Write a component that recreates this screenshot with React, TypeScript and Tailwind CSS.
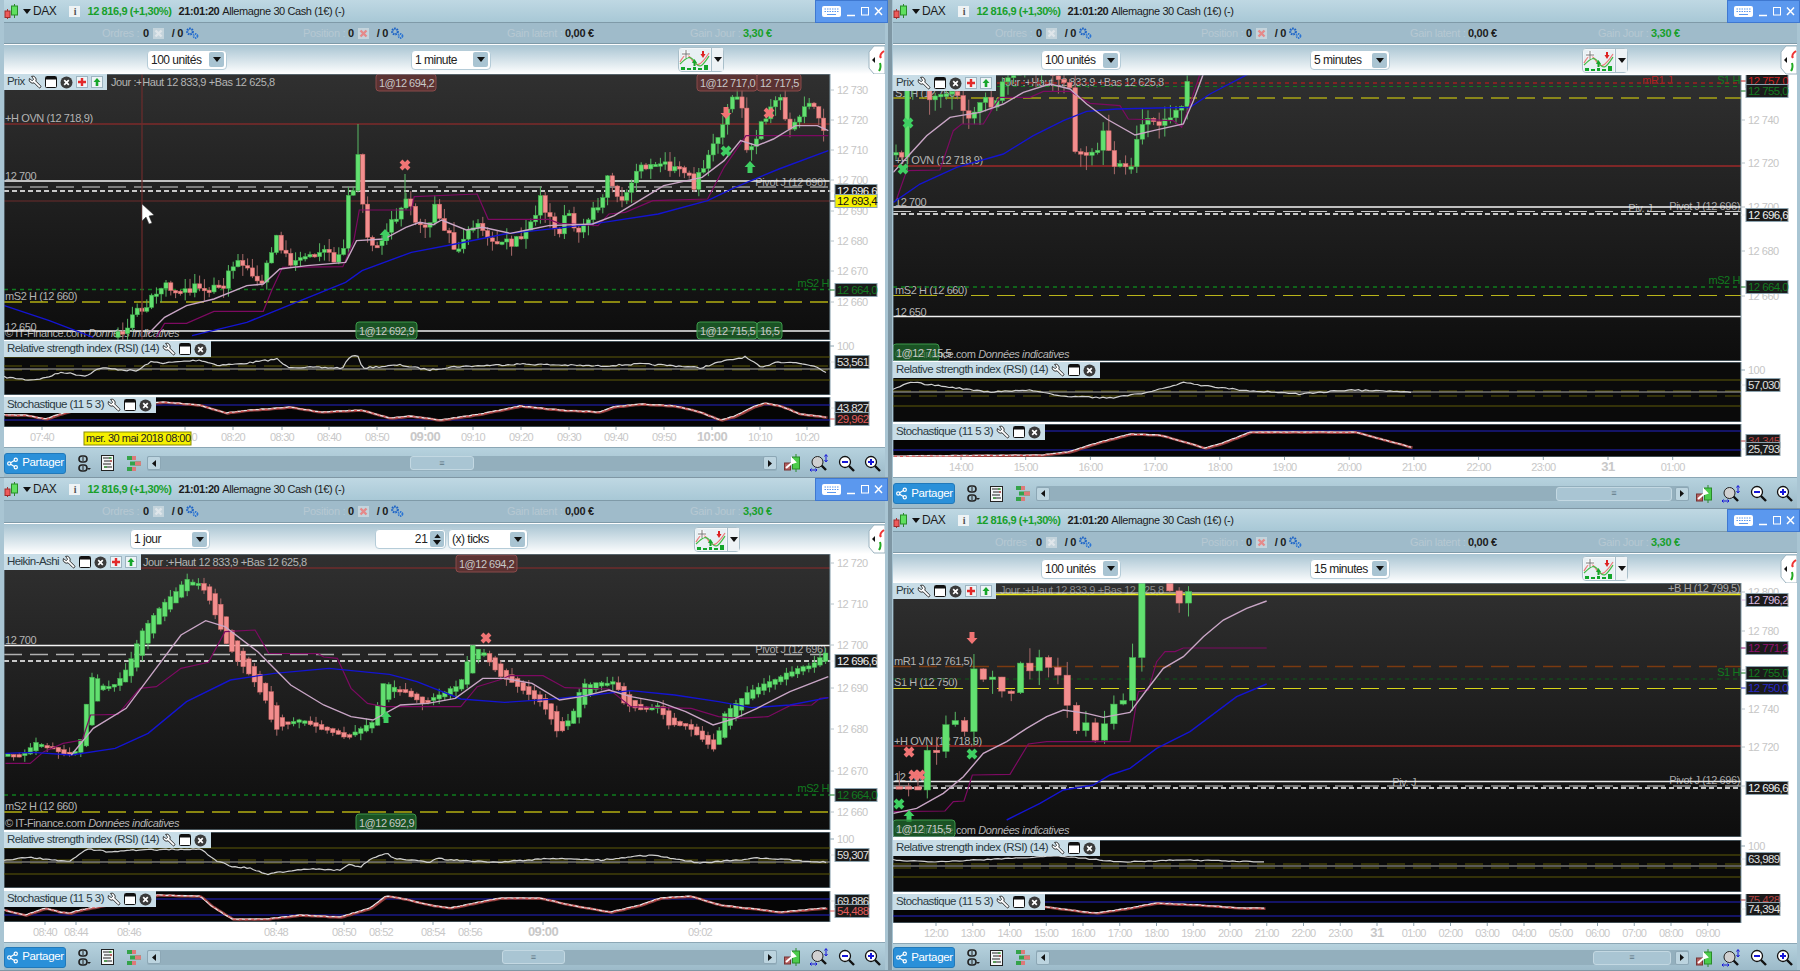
import { useId, type ReactNode } from 'react';
import { Share2, Wrench } from 'lucide-react';

type Pt = number[];

// control points are read off the picture, a = scale x, b = scale y, ox/oy = offset
const P = (s: string, a: number, b: number, ox: number, oy: number): Pt[] =>
  s.split(' ').map((p) => {
    const [x, y] = p.split(',').map(Number);
    return [ox + x * a, oy + y * b];
  });
const TL = (s: string) => P(s, 1 / 1.823, 1 / 3, 0, 74);
const BL = (s: string) => P(s, 1 / 1.823, 1 / 3, 0, 555);
const TR = (s: string) => P(s, 1 / 3, 1 / 3, 890, 74);
const BR = (s: string) => P(s, 1 / 3, 1 / 3, 890, 520);
const RAW = (s: string) => P(s, 1, 1, 0, 0);

const rng = (seed: number) => {
  let s = seed;
  return () => (s = (s * 16807) % 2147483647) / 2147483647;
};

const at = (p: Pt[], x: number) => {
  if (x <= p[0][0]) return p[0][1];
  for (let i = 1; i < p.length; i++) {
    if (x <= p[i][0]) {
      const t = (x - p[i - 1][0]) / (p[i][0] - p[i - 1][0] || 1);
      return p[i - 1][1] + (p[i][1] - p[i - 1][1]) * t;
    }
  }
  return p[p.length - 1][1];
};

const line = (p: Pt[]) => p.map((q) => q.join(',')).join(' ');

const noisy = (p: Pt[], step: number, amp: number, seed: number): Pt[] => {
  const r = rng(seed);
  const out: Pt[] = [];
  for (let x = p[0][0]; x <= p[p.length - 1][0]; x += step) out.push([x, at(p, x) + (r() - 0.5) * amp]);
  return out;
};

type CandleCfg = { path: Pt[]; from: number; to: number; step: number; body: number; noise: number; wick: number; seed: number; ha?: boolean };

const Candles = ({ path, from, to, step, body, noise, wick, seed, ha }: CandleCfg) => {
  const r = rng(seed);
  let open = at(path, from);
  let prev = open;
  const out: ReactNode[] = [];
  for (let x = from, i = 0; x <= to; x += step, i++) {
    const c = at(path, x) + (r() - 0.5) * noise;
    const o = ha ? (open + prev) / 2 : prev;
    const top = Math.min(o, c);
    const bot = Math.max(o, c);
    const up = c < o;
    out.push(
      <g key={i}>
        <line x1={x} x2={x} y1={top - r() * wick} y2={bot + r() * wick} stroke={up ? '#58b864' : '#a86a6a'} />
        <rect
          x={x - body / 2}
          y={top}
          width={body}
          height={Math.max(bot - top, 2.5)}
          fill={up ? '#62e070' : '#f38e8e'}
          stroke={up ? '#3fae4c' : '#d56a6a'}
          strokeWidth={0.5}
        />
      </g>
    );
    open = o;
    prev = c;
  }
  return <g>{out}</g>;
};

const Cross = ({ x, y, c }: { x: number; y: number; c: string }) => (
  <path d={`M${x - 4} ${y - 4}L${x + 4} ${y + 4}M${x + 4} ${y - 4}L${x - 4} ${y + 4}`} stroke={c} strokeWidth={4} />
);
const Arrow = ({ x, y, c, down }: { x: number; y: number; c: string; down?: boolean }) => (
  <polygon
    points={
      down
        ? `${x - 2.5},${y - 6} ${x + 2.5},${y - 6} ${x + 2.5},${y} ${x + 5.5},${y} ${x},${y + 6} ${x - 5.5},${y} ${x - 2.5},${y}`
        : `${x - 2.5},${y + 6} ${x + 2.5},${y + 6} ${x + 2.5},${y} ${x + 5.5},${y} ${x},${y - 6} ${x - 5.5},${y} ${x - 2.5},${y}`
    }
    fill={c}
  />
);

const RED = '#f07474';
const GRN = '#3fcf62';
const DASH = '18 8';
const DOT = '5 3';

type HLine = [number, string, number, string?];
type Label = [number, number, ReactNode, string?, boolean?];
type Badge = [number, number, number, string, boolean];
type Box = [number, string, string, string?];

const Copy = () => (
  <>
    © IT-Finance.com <tspan fontStyle="italic">Données indicatives</tspan>
  </>
);

type Geo = { x0: number; w: number; right: number };
const LEFT: Geo = { x0: 4, w: 881, right: 830 };
const RIGHT: Geo = { x0: 893, w: 904, right: 1741 };

const AxisBox = ({ g, y, text, color, bg, wide }: { g: Geo; y: number; text: string; color: string; bg?: string; wide?: boolean }) => {
  const x = g.right + 5;
  const w = wide ? 42 : 34;
  return (
    <g>
      <line x1={g.right} x2={x} y1={y} y2={y} stroke={color} />
      <rect x={x} y={y - 6.5} width={w} height={13} fill={bg ?? '#1b1b1b'} stroke="#8ca3af" />
      <text x={x + 2} y={y + 4} fontSize={11.5} letterSpacing={-0.6} fill={color}>
        {text}
      </text>
    </g>
  );
};

const Main = ({
  g,
  y0,
  h,
  candles,
  pale,
  blue,
  purple,
  lines,
  labels,
  badges,
  marks,
  prices,
  boxes,
  title
}: {
  g: Geo;
  y0: number;
  h: number;
  candles: CandleCfg;
  pale: Pt[];
  blue: Pt[][];
  purple: Pt[];
  lines: HLine[];
  labels: Label[];
  badges: Badge[];
  marks: ReactNode;
  prices: [number, string][];
  boxes: Box[];
  title: string;
}) => {
  const id = useId();
  const cw = g.right - g.x0;
  return (
    <div className="relative">
      <svg width={g.w} height={h} viewBox={`${g.x0} ${y0} ${g.w} ${h}`} className="block">
        <defs>
          <linearGradient id={id} x1="0" x2="0" y1="0" y2="1">
            <stop offset="0" stopColor="#303030" />
            <stop offset="1" stopColor="#0d0d0d" />
          </linearGradient>
        </defs>
        <svg x={g.x0} y={y0} width={cw} height={h} viewBox={`${g.x0} ${y0} ${cw} ${h}`}>
          <rect x={g.x0} y={y0} width={cw} height={h} fill={`url(#${id})`} />
          {labels.map(([x, y, t, c, end], i) => (
            <text key={i} x={x} y={y} fontSize={11} letterSpacing={-0.4} fill={c ?? '#b4b4b4'} textAnchor={end ? 'end' : 'start'}>
              {t}
            </text>
          ))}
          {lines.map(([y, c, w, d], i) => (
            <line key={i} x1={g.x0} x2={g.right} y1={y} y2={y} stroke={c} strokeWidth={w} strokeDasharray={d} />
          ))}
          <Candles {...candles} />
          <polyline points={line(purple)} fill="none" stroke="#7d0a62" strokeWidth={1.2} />
          {blue.map((b, i) => (
            <polyline key={i} points={line(b)} fill="none" stroke="#1414d2" strokeWidth={1.4} />
          ))}
          <polyline points={line(pale)} fill="none" stroke="#c9a6c6" strokeWidth={1.4} />
          {marks}
          {badges.map(([x, y, w, t, up], i) => (
            <g key={i}>
              <rect
                x={x}
                y={y}
                width={w}
                height={17}
                rx={3}
                fill={up ? '#1f6b2c' : '#6b3434'}
                fillOpacity={0.75}
                stroke={up ? '#3c9a4a' : '#8a4a4a'}
              />
              <text x={x + 3} y={y + 13} fontSize={11} letterSpacing={-0.5} fill="#c8c8c8">
                {t}
              </text>
            </g>
          ))}
        </svg>
        <rect x={g.x0} y={y0} width={cw} height={h} fill="none" stroke="#7f98a5" />
        {prices.map(([y, t]) => (
          <g key={t}>
            <line x1={g.right} x2={g.right + 4} y1={y} y2={y} stroke="#b8c4ca" />
            <text x={g.right + 7} y={y + 4} fontSize={11} letterSpacing={-0.5} fill="#c6c6c6">
              {t}
            </text>
          </g>
        ))}
        {boxes.map(([y, t, c, bg], i) => (
          <AxisBox key={i} g={g} y={y} text={t} color={c} bg={bg} wide />
        ))}
      </svg>
      <PaneTag label={title} toggles />
    </div>
  );
};

const WrenchIcon = () => <Wrench size={14} strokeWidth={1.6} fill="#fff" className="shrink-0 -scale-x-100 text-[#222]" />;
const WinIcon = () => (
  <svg width="12" height="12" viewBox="0 0 12 12" className="shrink-0">
    <rect x=".5" y=".5" width="11" height="11" rx="1" fill="#fff" stroke="#111" />
    <rect x="1" y="1" width="10" height="2.5" fill="#111" />
  </svg>
);
const CloseIcon = () => (
  <svg width="13" height="13" viewBox="0 0 13 13" className="shrink-0">
    <circle cx="6.5" cy="6.5" r="6" fill="#3a3a3a" />
    <path d="M4.2 4.2l4.6 4.6M8.8 4.2l-4.6 4.6" stroke="#fff" strokeWidth="1.7" />
  </svg>
);
const DocIcon = ({ up }: { up?: boolean }) => (
  <svg width="12" height="12" viewBox="0 0 12 12" className="shrink-0">
    <rect x=".5" y=".5" width="11" height="11" fill="#eef4f7" stroke="#9db4c0" />
    {up ? (
      <path d="M6 2l3.5 4H7.3v4H4.7V6H2.500z" fill="#16a62a" />
    ) : (
      <path d="M4.800 2h2.400v2.800H10v2.400H7.200V10H4.800V7.200H2V4.800h2.800z" fill="#e22a2a" />
    )}
  </svg>
);

const PaneTag = ({ label, toggles }: { label: string; toggles?: boolean }) => (
  <div className="absolute left-0 top-0 flex h-[16px] items-center gap-[3px] bg-[#c8dde7] pl-[3px] pr-[4px] text-[11.5px] leading-none tracking-[-0.55px] text-[#2b3a42]">
    <span className="whitespace-nowrap">{label}</span>
    <WrenchIcon />
    <WinIcon />
    <CloseIcon />
    {toggles && (
      <>
        <DocIcon />
        <DocIcon up />
      </>
    )}
  </div>
);

const Rsi = ({ g, y0, h, data, levels, mid, box, hundred, gap }: { g: Geo; y0: number; h: number; data: Pt[]; levels: number[]; mid: number; box: string; hundred: number; gap: string }) => (
  <div className={`relative ${gap}`}>
    <svg width={g.w} height={h} viewBox={`${g.x0} ${y0} ${g.w} ${h}`} className="block">
      <rect x={g.x0} y={y0} width={g.right - g.x0} height={h} fill="#0a0a0a" stroke="#7f98a5" />
      <line x1={g.x0} x2={g.right} y1={levels[0]} y2={levels[0]} stroke="#5e5a08" />
      <line x1={g.x0} x2={g.right} y1={levels[1]} y2={levels[1]} stroke="#5e5a08" strokeDasharray={DASH} />
      <line x1={g.x0} x2={g.right} y1={levels[2]} y2={levels[2]} stroke="#5e5a08" strokeDasharray={DASH} />
      <line x1={g.x0} x2={g.right} y1={levels[3]} y2={levels[3]} stroke="#5e5a08" />
      <line x1={g.x0} x2={g.right} y1={mid} y2={mid} stroke="#a8a8a8" />
      <polyline points={line(data)} fill="none" stroke="#d0d0d0" strokeWidth={1.2} />
      <text x={g.right + 7} y={hundred + 4} fontSize={11} letterSpacing={-0.5} fill="#c6c6c6">
        100
      </text>
      <line x1={g.right} x2={g.right + 4} y1={hundred} y2={hundred} stroke="#8ca3af" />
      <AxisBox g={g} y={mid - 7} text={box} color="#e0e0e0" />
    </svg>
    <PaneTag label="Relative strength index (RSI) (14)" />
  </div>
);

const Stoch = ({ g, y0, h, data, blues, boxes, gap }: { g: Geo; y0: number; h: number; data: Pt[]; blues: number[]; boxes: Box[]; gap: string }) => (
  <div className={`relative ${gap}`}>
    <svg width={g.w} height={h} viewBox={`${g.x0} ${y0} ${g.w} ${h}`} className="block">
      <rect x={g.x0} y={y0} width={g.right - g.x0} height={h} fill="#050505" stroke="#7f98a5" />
      {blues.map((y) => (
        <line key={y} x1={g.x0} x2={g.right} y1={y} y2={y} stroke="#2424c8" />
      ))}
      <polyline points={line(data.map(([x, y]) => [x + 1.5, y + 0.5]))} fill="none" stroke="#8c3c3c" strokeWidth={2.6} />
      <polyline points={line(data)} fill="none" stroke="#e8e8e8" strokeWidth={1.3} />
      <polyline points={line(data.map(([x, y]) => [x + 1, y + 0.3]))} fill="none" stroke="#e05050" strokeWidth={1} strokeDasharray="3 3" />
      {boxes.map(([y, t, c], i) => (
        <AxisBox key={i} g={g} y={y} text={t} color={c} />
      ))}
    </svg>
    <PaneTag label="Stochastique (11 5 3)" />
  </div>
);

const TimeAxis = ({ g, y0, h, ticks, extra }: { g: Geo; y0: number; h: number; ticks: [number, string, boolean?][]; extra?: ReactNode }) => (
  <svg width={g.w} height={h} viewBox={`${g.x0} ${y0} ${g.w} ${h}`} className="block">
    {ticks.map(([x, t, bold]) => (
      <g key={t + x}>
        <line x1={x} x2={x} y1={y0} y2={y0 + 3} stroke="#8ca3af" />
        <text x={x} y={y0 + 14} fontSize={bold ? 13 : 11} letterSpacing={bold ? -0.6 : -0.7} fontWeight={bold ? 700 : 400} fill="#c8c8c8" textAnchor="middle">
          {t}
        </text>
      </g>
    ))}
    {extra}
  </svg>
);

const CandleLogo = () => (
  <svg width="15" height="17" viewBox="0 0 15 17" className="shrink-0">
    <path d="M3.500 6v10" stroke="#a33" />
    <rect x="1" y="8" width="5" height="6.500" fill="#ee5a5a" stroke="#9c2c2c" />
    <path d="M10.500 1v14" stroke="#2a8a2a" />
    <rect x="7.500" y="3" width="6" height="9" fill="#5fe05f" stroke="#2a8a2a" />
  </svg>
);
const Caret = () => (
  <svg width="8" height="5" viewBox="0 0 8 5">
    <path d="M0 0h8L4 5z" fill="#111" />
  </svg>
);
const Gears = () => (
  <svg width="14" height="13" viewBox="0 0 14 13">
    <circle cx="5" cy="4.500" r="2.800" fill="none" stroke="#1b62c6" strokeWidth="2.200" strokeDasharray="1.600 .8" />
    <circle cx="10.500" cy="9" r="2" fill="none" stroke="#2a74d4" strokeWidth="1.800" strokeDasharray="1.300 .7" />
  </svg>
);
const Marker = ({ c }: { c: string }) => (
  <svg width="11" height="11" viewBox="0 0 11 11">
    <rect width="11" height="11" fill="#c4d4dc" />
    <path d="M2.500 2.500l6 6M8.500 2.500l-6 6" stroke={c} strokeWidth="2.400" />
  </svg>
);

const TitleBar = () => (
  <div className="flex h-[23px] shrink-0 items-center whitespace-nowrap border-b border-[#7f9aa8] bg-linear-to-b from-[#bfd8e3] to-[#a8c8d6] text-[11px] tracking-[-0.4px] text-[#1c1c1c]">
    <CandleLogo />
    <span className="ml-[4px]">
      <Caret />
    </span>
    <span className="ml-[2px] text-[12px]">DAX</span>
    <span className="ml-[13px] flex h-[11px] w-[11px] items-center justify-center bg-[#eef3f5] font-['Liberation_Serif'] text-[10px] font-bold text-[#555]">i</span>
    <span className="ml-[7px] font-bold text-[#17a02a]">12 816,9 (+1,30%)</span>
    <span className="ml-[7px] font-bold">21:01:20</span>
    <span className="ml-[3px]">Allemagne 30 Cash (1€) (-)</span>
    <div className="-mr-[3px] ml-auto flex h-[23px] w-[73px] items-center gap-[6px] border border-[#3f78d0] bg-[#5b98ee] pl-[6px]">
      <svg width="19" height="13" viewBox="0 0 19 13">
        <rect width="19" height="11" y="1" rx="2" fill="#fff" />
        <path d="M2.500 4h14M2.500 6.500h14" stroke="#5b98ee" strokeDasharray="1.500 1" />
        <path d="M5 9.500h9" stroke="#5b98ee" />
      </svg>
      <svg width="38" height="11" viewBox="0 0 38 11">
        <path d="M0 9.500h8" stroke="#fff" strokeWidth="1.500" />
        <rect x="14.500" y="1.500" width="7" height="7.500" fill="none" stroke="#fff" />
        <path d="M28 1.500l7 7.500M35 1.500l-7 7.500" stroke="#fff" strokeWidth="1.500" />
      </svg>
    </div>
  </div>
);

const OrdersRow = ({ cols, h }: { cols: string; h: string }) => (
  <div className={`grid shrink-0 items-center whitespace-nowrap border-b border-[#7f9aa8] bg-[#9fbbca] text-[11px] tracking-[-0.3px] ${cols} ${h}`}>
    <div className="flex items-center">
      <span className="w-[41px] text-[#b6c8d2]">Ordres :</span>
      <b className="text-[#1c1c1c]">0</b>
      <span className="ml-[4px]">
        <Marker c="#dfe6ea" />
      </span>
      <b className="ml-[8px] text-[#1c1c1c]">/ 0</b>
      <span className="ml-[2px]">
        <Gears />
      </span>
    </div>
    <div className="flex items-center">
      <span className="w-[45px] text-[#b6c8d2]">Position :</span>
      <b className="text-[#1c1c1c]">0</b>
      <span className="ml-[4px]">
        <Marker c="#e58a8a" />
      </span>
      <b className="ml-[8px] text-[#1c1c1c]">/ 0</b>
      <span className="ml-[2px]">
        <Gears />
      </span>
    </div>
    <div className="flex items-center">
      <span className="w-[58px] text-[#b6c8d2]">Gain latent :</span>
      <b className="text-[#1c1c1c]">0,00 €</b>
    </div>
    <div className="flex items-center">
      <span className="w-[53px] text-[#b6c8d2]">Gain Jour :</span>
      <b className="text-[#17a02a]">3,30 €</b>
    </div>
  </div>
);

const DropBtn = () => (
  <span className="flex h-[15px] w-[15px] shrink-0 items-center justify-center rounded-[2px] bg-[#a9c4d2]">
    <Caret />
  </span>
);
const Select = ({ label, className }: { label: string; className: string }) => (
  <div className={`flex h-[20px] w-[80px] items-center justify-between whitespace-nowrap rounded border border-[#b5ccd8] bg-white pl-[3px] pr-[2px] text-[12px] tracking-[-0.5px] text-[#222] ${className}`}>
    {label}
    <DropBtn />
  </div>
);
const Spinner = ({ className }: { className: string }) => (
  <div className={`flex h-[20px] w-[71px] items-center justify-end rounded border border-[#b5ccd8] bg-white pr-[1px] text-[12px] text-[#222] ${className}`}>
    21
    <span className="ml-[2px] flex h-[16px] w-[14px] flex-col items-center justify-center gap-[2px] rounded-[2px] bg-[#a9c4d2]">
      <svg width="7" height="4" viewBox="0 0 8 5">
        <path d="M0 5h8L4 0z" fill="#111" />
      </svg>
      <Caret />
    </span>
  </div>
);
const IndicBtn = ({ className }: { className: string }) => (
  <div className={`flex h-[25px] w-[46px] items-center rounded border border-[#a9bfca] bg-white ${className}`}>
    <svg width="32" height="23" viewBox="0 0 32 23">
      <rect x=".5" y=".5" width="31" height="22" fill="#e8f0f4" />
      <path d="M1 14c5-9 8-9 12-2s8 7 17-7" fill="none" stroke="#e77" strokeWidth="1.200" />
      <path d="M1 16c6-6 10-10 15-2s8 3 14-6" fill="none" stroke="#4b4" strokeWidth="1.200" />
      <path d="M3 6h8M7 2v8" stroke="#fff" strokeWidth="3" />
      <path d="M3 6h8M7 2v8" stroke="#777" strokeWidth="1" />
      <path d="M13 15l2.500-4 2.500 4h-1.500v3h-2v-3z" fill="#16a62a" />
      <path d="M23 3h2v3h1.500L24 10l-2.500-4H23z" fill="#dd2222" />
      <path d="M2 19h4v3H2zM8 20h4v2H8zM14 19h3v3h-3zM19 20h4v2h-4zM25 17h4v5h-4z" fill="#12a52a" />
    </svg>
    <span className="flex h-full flex-1 items-center justify-center border-l border-[#a9bfca] bg-[#eef3f6]">
      <Caret />
    </span>
  </div>
);
const SideTab = () => (
  <svg width="17" height="30" viewBox="0 0 17 30" className="ml-auto">
    <polygon points="6,1 17,1 17,29 6,29 1,23 1,7" fill="#fff" stroke="#9db4c0" />
    <path d="M7 12l-3 3 3 3z" fill="#111" />
    <path d="M13 13c-2-3 0-5 3-7" fill="none" stroke="#e33" strokeWidth="2" />
    <path d="M11 26c2-3 2-5 1-8" fill="none" stroke="#2a2" strokeWidth="2" />
  </svg>
);

const Toolbar = ({ h, children }: { h: string; children: ReactNode }) => (
  <div className={`flex shrink-0 items-center border-t border-white/40 bg-linear-to-b from-[#a8c4d2] to-white ${h}`}>
    {children}
    <SideTab />
  </div>
);

const ScrollBtn = ({ right }: { right?: boolean }) => (
  <span className="flex h-[14px] w-[14px] shrink-0 items-center justify-center rounded-[2px] border border-[#8ca7b5] bg-[#bcd4df]">
    <svg width="4" height="7" viewBox="0 0 4 7">
      <path d={right ? 'M0 0l4 3.500L0 7z' : 'M4 0L0 3.500 4 7z'} fill="#111" />
    </svg>
  </span>
);

const BarIcons = () => (
  <>
    <svg width="14" height="17" viewBox="0 0 14 17" className="ml-[11px] shrink-0">
      <rect x="2" y="1" width="8" height="6" rx="3" fill="none" stroke="#222" strokeWidth="1.600" />
      <rect x="2" y="10" width="8" height="6" rx="3" fill="none" stroke="#222" strokeWidth="1.600" />
      <path d="M6 2v4M6 11v4" stroke="#222" />
      <path d="M10 13h4l-2 2z" fill="#222" />
    </svg>
    <svg width="14" height="16" viewBox="0 0 14 16" className="ml-[10px] shrink-0">
      <rect x=".5" y=".5" width="12" height="15" fill="#f4f6f7" stroke="#222" />
      <path d="M2 3h8M3 6h8M2 9h8M3 12h8" stroke="#222" />
      <path d="M8 3h3M3 12h3" stroke="#2a2" />
      <path d="M9 6h2" stroke="#d33" />
    </svg>
    <svg width="16" height="15" viewBox="0 0 16 15" className="ml-[11px] shrink-0">
      <path d="M1 0h9v4H1zM4 5.500h11v4H4zM1 11h9v4H1z" fill="#34a34a" />
      <path d="M6 0h4v4H6zM9 5.500h6v4H9zM6 11h4v4H6z" fill="#dd7a7a" />
    </svg>
  </>
);

const Lens = ({ c, glass }: { c: ReactNode; glass: string }) => (
  <svg width="18" height="17" viewBox="0 0 18 17">
    <path d="M10 10l6 6" stroke="#111" strokeWidth="2.400" />
    <circle cx="7" cy="7" r="5.500" fill={glass} stroke="#111" strokeWidth="1.300" />
    {c}
  </svg>
);

const BarTools = ({ g3 }: { g3: string }) => (
  <div className={`flex shrink-0 items-center ${g3}`}>
    <svg width="16" height="18" viewBox="0 0 16 18">
      <path d="M12 0v18" stroke="#2a8a2a" />
      <rect x="8.500" y="3" width="7" height="12" fill="#4ccc4c" stroke="#2a8a2a" />
      <rect x=".5" y="9" width="6" height="7" fill="#b56060" stroke="#733" />
      <path d="M2 14l7-6M8 5l3 3-3 1z" stroke="#fff" strokeWidth="2" fill="#fff" />
    </svg>
    <span className="ml-[10px]">
      <svg width="19" height="18" viewBox="0 0 19 18">
        <path d="M11 11l5 5" stroke="#111" strokeWidth="2.400" />
        <circle cx="7.500" cy="8" r="5.500" fill="#d0d0d0" stroke="#222" />
        <path d="M16 1v6M14.500 2.500L16 .5l1.500 2M14.500 6L16 8l1.500-2M0 16h7M1.500 14.500L0 16l1.500 1.500M5.500 14.500L7 16l-1.500 1.500" stroke="#1616d8" fill="none" />
      </svg>
    </span>
    <span className="ml-[9px]">
      <Lens glass="#fff" c={<path d="M4 7h6" stroke="#1616d8" strokeWidth="2" />} />
    </span>
    <span className="ml-[8px]">
      <Lens glass="#fff" c={<path d="M4 7h6M7 4v6" stroke="#1616d8" strokeWidth="2" />} />
    </span>
  </div>
);

const BottomBar = ({ h, offset, thumb }: { h: string; offset: string; thumb: string }) => (
  <div className={`flex shrink-0 items-center border-t border-[#8ca7b5] bg-linear-to-b from-[#b6d2de] to-[#9bb9c8] ${h}`}>
    <div className="flex h-[21px] w-[62px] items-center justify-center gap-[3px] rounded-[3px] border border-[#2179ba] bg-[#2a90d9] text-[11.5px] tracking-[-0.3px] text-white">
      <Share2 size={13} strokeWidth={2.2} />
      Partager
    </div>
    <BarIcons />
    <div className="ml-[5px] flex h-[15px] flex-1 items-center rounded-[2px] bg-[#93afbd]">
      <ScrollBtn />
      <div className={`flex h-[14px] items-center justify-center rounded-[3px] border border-[#c3d8e2] bg-[#a9c5d3] text-[9px] leading-none text-[#5f7785] ${offset} ${thumb}`}>≡</div>
      <span className="ml-auto flex">
        <ScrollBtn right />
      </span>
    </div>
    <BarTools g3="ml-[7px] mr-[3px]" />
  </div>
);

const Window = ({ left, h, children }: { left?: boolean; h: string; children: ReactNode }) => (
  <div className={`flex flex-col overflow-hidden border-b border-[#7f97a4] bg-[#a9c5d3] pr-[3px] ${left ? 'pl-[4px]' : 'pl-[1px]'} ${h}`}>{children}</div>
);

const Body = ({ children }: { children: ReactNode }) => <div className="flex-1 bg-white">{children}</div>;

const tlTicks: [number, string, boolean?][] = [
  [42, '07:40'],
  [185, '08:10'],
  [233, '08:20'],
  [282, '08:30'],
  [329, '08:40'],
  [377, '08:50'],
  [425, '09:00', true],
  [473, '09:10'],
  [521, '09:20'],
  [569, '09:30'],
  [616, '09:40'],
  [664, '09:50'],
  [712, '10:00', true],
  [760, '10:10'],
  [807, '10:20']
];
const trTicks: [number, string, boolean?][] = ['14:00', '15:00', '16:00', '17:00', '18:00', '19:00', '20:00', '21:00', '22:00', '23:00', '31', '01:00'].map((t, i) => [961 + i * 64.7, t, t === '31']);
const blTicks: [number, string, boolean?][] = [
  [45, '08:40'],
  [76, '08:44'],
  [129, '08:46'],
  [276, '08:48'],
  [344, '08:50'],
  [381, '08:52'],
  [433, '08:54'],
  [470, '08:56'],
  [543, '09:00', true],
  [700, '09:02']
];
const brTicks: [number, string, boolean?][] = ['12:00', '13:00', '14:00', '15:00', '16:00', '17:00', '18:00', '19:00', '20:00', '21:00', '22:00', '23:00', '31', '01:00', '02:00', '03:00', '04:00', '05:00', '06:00', '07:00', '08:00', '09:00'].map((t, i) => [936 + i * 36.75, t, t === '31']);

const JOUR = 'Jour :+Haut 12 833,9 +Bas 12 625,8';
const LEFT_COLS = 'pl-[98px] grid-cols-[201px_204px_183px_1fr]';
const RIGHT_COLS = 'pl-[102px] grid-cols-[206px_209px_188px_1fr]';

export default function App() {
  return (
    <div className="flex h-[971px] w-[1800px] overflow-hidden bg-[#8fa8b5] font-['Liberation_Sans',sans-serif]">
      <div className="flex w-[888px] shrink-0 flex-col">
        <Window left h="h-[478px]">
          <TitleBar />
          <OrdersRow cols={LEFT_COLS} h="h-[21px]" />
          <Toolbar h="h-[30px]">
            <Select label="100 unités" className="ml-[143px]" />
            <Select label="1 minute" className="ml-[184px]" />
            <IndicBtn className="ml-[187px]" />
          </Toolbar>
          <Body>
            <Main
              g={LEFT}
              y0={74}
              h={266}
              title="Prix"
              candles={{
                path: TL('215,790 240,730 270,690 295,630 330,640 370,640 400,650 430,570 480,625 500,490 530,560 570,530 625,560 635,370 645,360 655,225 665,500 690,500 740,380 770,470 795,400 830,530 860,440 880,480 910,520 960,480 985,370 1015,495 1035,390 1050,480 1090,400 1110,300 1130,380 1160,290 1200,270 1250,300 1265,330 1300,210 1330,90 1350,70 1360,240 1380,180 1420,70 1440,180 1470,80 1500,150 1508,300'),
                from: 118,
                to: 827,
                step: 4.8,
                body: 4.2,
                noise: 11,
                wick: 11,
                seed: 41
              }}
              pale={TL('270,780 300,730 340,695 390,675 450,635 480,630 510,585 560,575 630,565 650,500 700,495 740,460 765,445 790,452 805,438 850,468 880,460 930,478 970,465 1000,455 1080,450 1120,425 1160,385 1210,335 1280,310 1320,260 1350,200 1380,215 1410,195 1450,155 1490,155 1510,170')}
              blue={[TL('8,695 90,740 170,790'), TL('350,785 450,745 540,685 630,625 660,590 750,535 830,510 920,480 1030,460 1100,445 1200,420 1290,380 1340,340 1420,285 1510,230')]}
              purple={TL('285,790 300,748 340,748 390,712 480,712 495,650 515,580 625,578 645,500 655,408 750,408 755,368 870,360 890,436 1000,436 1020,448 1090,455 1110,420 1140,415 1190,380 1290,375 1320,280 1360,185 1510,185')}
              lines={[
                [124, '#a52a2a', 1.2],
                [181, '#f4f4f4', 1.6],
                [187, '#9a9a9a', 1.6, DASH],
                [191, '#ffffff', 1.6, DOT],
                [201, '#6e2c2c', 1.2],
                [289.500, '#0f7d1e', 1.4, '4 4'],
                [302, '#b3ae12', 1.4, DASH],
                [331, '#f0f0f0', 1.6]
              ]}
              labels={[
                [111, 86, JOUR],
                [5, 122, '+H OVN (12 718,9)'],
                [5, 180, '12 700'],
                [5, 300, 'mS2 H (12 660)'],
                [5, 331, '12 650'],
                [5, 337, <Copy key="c" />],
                [826, 186, 'Pivot J (12 696)', '#a8a8a8', true],
                [829, 287, 'mS2 H', '#117a1f', true]
              ]}
              badges={[
                [376, 74, 60, '1@12 694,2', false],
                [697, 74, 60, '1@12 717,0', false],
                [757, 74, 44, '12 717,5', false],
                [356, 322, 61, '1@12 692,9', true],
                [697, 322, 60, '1@12 715,5', true],
                [757, 322, 25, '16,5', true]
              ]}
              marks={
                <>
                  <line x1={358} x2={358} y1={124} y2={150} stroke="#58b864" />
                  <line x1={405} x2={405} y1={174} y2={200} stroke="#58b864" />
                  <Cross x={405} y={165} c={RED} />
                  <Cross x={726} y={151} c={GRN} />
                  <Cross x={769} y={113} c={RED} />
                  <Arrow x={726} y={113} c={RED} down />
                  <Arrow x={750} y={167} c={GRN} />
                  <Arrow x={385} y={235} c={GRN} />
                  <line x1={142} x2={142} y1={74} y2={340} stroke="#6e2c2c" strokeWidth={1.2} />
                  <polygon points="142,204 142,221 146,217 149,224 152,223 149,216 154,215" fill="#fff" stroke="#333" strokeWidth={0.5} />
                </>
              }
              prices={[
                [90, '12 730'],
                [120, '12 720'],
                [150, '12 710'],
                [180, '12 700'],
                [211, '12 690'],
                [241, '12 680'],
                [271, '12 670'],
                [302, '12 660']
              ]}
              boxes={[
                [191, '12 696,6', '#f0f0f0'],
                [201, '12 693,4', '#111', '#f5f000'],
                [290, '12 664,0', '#127a20']
              ]}
            />
            <Rsi
              g={LEFT}
              gap="mt-px"
              y0={341}
              h={54}
              mid={369}
              hundred={346}
              box="53,561"
              levels={[357, 366, 370, 380]}
              data={noisy(RAW('4,377 30,380 45,378 62,372 85,376 100,368 125,370 137,371 150,362 165,363 200,360 217,365 240,364 277,359 287,367 343,368 348,358 357,355 363,368 400,365 430,370 450,367 520,364 600,366 640,364 680,366 700,368 720,362 745,357 762,368 775,362 790,362 815,366 826,372'), 3, 1.6, 7)}
            />
            <Stoch
              g={LEFT}
              gap="mt-[2px]"
              y0={397}
              h={30}
              blues={[405, 420]}
              data={noisy(RAW('4,415 25,415 45,419 60,414 80,408 165,402 200,405 225,413 250,410 290,407 320,412 360,410 390,418 410,416 440,420 480,414 520,406 560,410 600,412 612,407 640,404 660,405 675,406 700,412 720,420 735,416 750,408 765,403 780,406 800,414 826,417'), 3, 0.5, 11)}
              boxes={[
                [408, '43,827', '#e0e0e0'],
                [419, '29,962', '#e05a5a']
              ]}
            />
            <TimeAxis
              g={LEFT}
              y0={427}
              h={20}
              ticks={tlTicks}
              extra={
                <g>
                  <rect x={84} y={432} width={107} height={13} fill="#f5f000" stroke="#8a8a00" />
                  <text x={86} y={442} fontSize={11} letterSpacing={-0.5} fill="#222">
                    mer. 30 mai 2018 08:00
                  </text>
                </g>
              }
            />
          </Body>
          <BottomBar h="h-[31px]" offset="ml-[249px]" thumb="w-[64px]" />
        </Window>
        <Window left h="h-[493px]">
          <TitleBar />
          <OrdersRow cols={LEFT_COLS} h="h-[22px]" />
          <Toolbar h="h-[31px]">
            <Select label="1 jour" className="ml-[126px]" />
            <Spinner className="ml-[165px]" />
            <Select label="(x) ticks" className="ml-[2px]" />
            <IndicBtn className="ml-[166px]" />
          </Toolbar>
          <Body>
            <Main
              g={LEFT}
              y0={554}
              h={276}
              title="Heikin-Ashi"
              candles={{
                path: BL('10,600 40,600 65,560 100,585 120,605 145,580 160,420 170,350 190,395 210,390 235,330 255,240 275,190 300,140 325,100 342,70 365,90 380,130 395,190 410,260 430,310 460,370 485,440 500,525 520,510 550,490 570,510 600,530 630,545 650,530 680,500 700,380 730,405 770,445 800,420 840,385 860,270 880,290 910,360 950,400 990,450 1020,540 1045,470 1060,390 1120,380 1140,450 1170,465 1200,450 1220,510 1250,510 1280,550 1300,585 1320,480 1365,410 1400,380 1440,350 1480,330 1510,290'),
                from: 8,
                to: 827,
                step: 5.6,
                body: 4.6,
                noise: 2,
                wick: 7,
                seed: 77,
                ha: true
              }}
              pale={BL('130,600 170,520 230,460 280,350 330,240 375,197 410,215 470,290 530,390 590,450 640,485 680,495 730,450 780,445 830,430 880,370 920,370 970,385 1020,435 1060,425 1110,405 1150,425 1200,440 1250,470 1300,510 1340,490 1380,460 1440,410 1510,365')}
              blue={[BL('10,595 60,592 130,600 210,580 270,535 340,440 420,375 500,355 600,340 710,358 760,380 840,432 920,442 1000,433 1080,420 1150,407 1230,420 1310,440 1370,458 1440,450 1510,428')]}
              purple={BL('10,625 55,625 80,590 115,565 150,555 165,480 215,478 255,400 285,395 330,340 380,322 410,230 465,225 490,295 580,296 590,306 615,310 640,400 670,445 700,455 840,455 870,395 910,375 930,362 990,362 1030,398 1110,402 1150,455 1260,460 1310,485 1345,490 1400,485 1440,452 1480,450 1495,430 1510,428')}
              lines={[
                [568, '#8e2a2a', 1.2],
                [645.500, '#f4f4f4', 1.6],
                [654.500, '#b0b0b0', 1.4, DASH],
                [661, '#ffffff', 1.6, DOT],
                [795, '#0f7d1e', 1.4, '4 4'],
                [812, '#b3ae12', 1.4, DASH]
              ]}
              labels={[
                [143, 566, JOUR],
                [5, 644, '12 700'],
                [5, 810, 'mS2 H (12 660)'],
                [5, 827, <Copy key="c" />],
                [826, 653, 'Pivot J (12 696)', '#a8a8a8', true],
                [829, 792, 'mS2 H', '#117a1f', true]
              ]}
              badges={[
                [456, 555, 61, '1@12 694,2', false],
                [356, 814, 60, '1@12 692,9', true]
              ]}
              marks={
                <>
                  <Cross x={486} y={638} c={RED} />
                  <Arrow x={386} y={717} c={GRN} />
                </>
              }
              prices={[
                [563, '12 720'],
                [604, '12 710'],
                [645, '12 700'],
                [688, '12 690'],
                [729, '12 680'],
                [771, '12 670'],
                [812, '12 660']
              ]}
              boxes={[
                [661, '12 696,6', '#f0f0f0'],
                [795, '12 664,0', '#127a20']
              ]}
            />
            <Rsi
              g={LEFT}
              gap="mt-[2px]"
              y0={832}
              h={56}
              mid={862}
              hundred={839}
              box="59,307"
              levels={[848, 860, 863, 874]}
              data={noisy(RAW('4,861 30,857 50,860 70,861 88,849 110,852 130,850 200,849 217,861 233,867 250,868 267,874 283,872 307,869 340,870 350,864 360,867 373,858 387,853 392,858 413,860 430,862 437,858 450,860 500,862 560,858 600,860 650,855 700,863 760,858 826,862'), 3, 1.4, 23)}
            />
            <Stoch
              g={LEFT}
              gap="mt-[3px]"
              y0={891}
              h={31}
              blues={[899, 915]}
              data={noisy(RAW('4,910 25,915 45,908 60,912 70,913 80,910 157,895 200,896 210,905 232,919 265,919 300,915 340,917 370,908 386,896 400,898 430,905 450,908 500,898 540,898 570,905 610,912 640,905 660,898 690,896 720,905 780,912 826,908'), 3, 0.4, 13)}
              boxes={[
                [901, '69,886', '#e0e0e0'],
                [911, '54,488', '#e05a5a']
              ]}
            />
            <TimeAxis g={LEFT} y0={922} h={20} ticks={blTicks} />
          </Body>
          <BottomBar h="h-[29px]" offset="ml-[341px]" thumb="w-[63px]" />
        </Window>
      </div>
      <div className="w-[4px] shrink-0 bg-[#7f97a4]" />
      <div className="flex flex-1 flex-col">
        <Window h="h-[509px]">
          <TitleBar />
          <OrdersRow cols={RIGHT_COLS} h="h-[21px]" />
          <Toolbar h="h-[31px]">
            <Select label="100 unités" className="ml-[148px]" />
            <Select label="5 minutes" className="ml-[189px]" />
            <IndicBtn className="ml-[192px]" />
          </Toolbar>
          <Body>
            <Main
              g={RIGHT}
              y0={75}
              h={286}
              title="Prix"
              candles={{
                path: TR('20,240 40,250 45,115 50,40 60,-10 100,40 118,80 135,70 170,60 200,50 215,110 235,130 265,100 280,60 310,115 325,60 340,20 400,-5 450,-10 500,10 540,40 555,230 570,230 590,245 605,230 620,245 637,165 655,220 670,285 685,270 700,260 718,300 735,225 750,155 765,140 780,130 800,160 815,155 830,120 848,135 865,85 880,100 895,0'),
                from: 896,
                to: 1188,
                step: 5.6,
                body: 4.6,
                noise: 3,
                wick: 16,
                seed: 19
              }}
              pale={TR('10,295 60,240 110,185 180,130 210,125 270,115 340,90 400,55 480,30 540,45 590,90 650,135 735,183 790,170 880,150 910,80 940,0')}
              blue={[TR('10,385 90,330 200,280 340,240 430,185 520,140 590,112 680,105 800,102 900,100 960,60 1075,0')]}
              purple={TR('20,375 50,290 150,288 190,170 215,150 280,150 310,100 330,70 420,70 460,52 540,52 600,88 690,95 715,135 850,140 875,160 900,90 930,0')}
              lines={[
                [83, '#a02020', 1.4, '4 4'],
                [86.500, '#0f7d1e', 1, '4 4'],
                [98, '#a8a414', 1.6, DASH],
                [166, '#d82a2a', 1.2],
                [207, '#f4f4f4', 1.6],
                [211.500, '#c8c8c8', 1.2, DASH],
                [214, '#ffffff', 1.4, DOT],
                [287, '#0f7d1e', 1.4, '4 4'],
                [295.500, '#b9b41a', 1.2, DASH],
                [316.500, '#f0f0f0', 1.6]
              ]}
              labels={[
                [1000, 86, JOUR],
                [895, 97, 'S1 H (12 750)'],
                [895, 164, '+H OVN (12 718,9)'],
                [895, 206, '12 700'],
                [895, 294, 'mS2 H (12 660)'],
                [895, 316, '12 650'],
                [895, 358, <Copy key="c" />],
                [1740, 210, 'Pivot J (12 696)', '#a8a8a8', true],
                [1652, 212, 'Piv. J', '#a8a8a8', true],
                [1740, 284, 'mS2 H', '#117a1f', true],
                [1740, 84, 'S1 H', '#117a1f', true],
                [1672, 84, 'mR1 J', '#b02020', true]
              ]}
              badges={[[893, 344, 46, '1@12 715,5', true]]}
              marks={
                <>
                  <Cross x={908} y={123} c={GRN} />
                  <Cross x={903} y={169} c={GRN} />
                </>
              }
              prices={[
                [120, '12 740'],
                [163, '12 720'],
                [207, '12 700'],
                [251, '12 680'],
                [296, '12 660']
              ]}
              boxes={[
                [81, '12 757,0', '#c82020'],
                [91, '12 755,0', '#127a20'],
                [215, '12 696,6', '#f0f0f0'],
                [287, '12 664,0', '#127a20']
              ]}
            />
            <Rsi
              g={RIGHT}
              gap="mt-px"
              y0={362}
              h={60}
              mid={392}
              hundred={370}
              box="57,030"
              levels={[380, 391, 396, 406]}
              data={noisy(RAW('893,390 910,382 940,386 990,392 1030,390 1060,396 1110,398 1150,392 1185,382 1200,385 1240,390 1300,394 1350,390 1414,392'), 3.5, 1.4, 31)}
            />
            <Stoch
              g={RIGHT}
              gap="mt-[2px]"
              y0={424}
              h={33}
              blues={[431, 450]}
              data={noisy(RAW('893,456 1040,455 1068,452 1100,442 1130,434 1160,435 1205,448 1225,442 1250,432 1355,432 1414,448'), 3.5, 0.4, 37)}
              boxes={[
                [441, '34,345', '#b04040'],
                [449, '25,793', '#e0e0e0']
              ]}
            />
            <TimeAxis g={RIGHT} y0={457} h={20} ticks={trTicks} />
          </Body>
          <BottomBar h="h-[32px]" offset="ml-[506px]" thumb="w-[116px]" />
        </Window>
        <Window h="h-[462px]">
          <TitleBar />
          <OrdersRow cols={RIGHT_COLS} h="h-[21px]" />
          <Toolbar h="h-[30px]">
            <Select label="100 unités" className="ml-[148px]" />
            <Select label="15 minutes" className="ml-[189px]" />
            <IndicBtn className="ml-[192px]" />
          </Toolbar>
          <Body>
            <Main
              g={RIGHT}
              y0={583}
              h={254}
              title="Prix"
              candles={{
                path: BR('28,800 56,800 84,810 110,690 138,700 166,615 195,600 222,650 247,440 276,480 304,465 332,510 360,535 386,420 414,465 442,405 470,440 498,450 524,520 552,650 580,585 608,670 636,635 662,555 690,547 718,530 746,190 775,120 800,90 830,180 855,265 883,230 911,195'),
                from: 899.300,
                to: 1195,
                step: 9.33,
                body: 6.400,
                noise: 0,
                wick: 16,
                seed: 53
              }}
              pale={BR('10,880 80,865 160,820 220,770 280,700 350,665 410,625 470,590 520,570 590,580 640,592 720,577 770,510 820,445 880,410 940,350 1000,300 1070,265 1130,243')}
              blue={[BR('350,900 450,850 520,810 610,795 660,765 720,745 800,685 900,635 960,590 1040,530 1130,492')]}
              purple={BR('10,875 165,873 190,845 222,843 247,765 360,763 415,672 470,665 720,665 745,515 775,510 800,425 825,395 855,395 880,384 1130,384')}
              lines={[
                [593, '#f0f0f0', 1.2],
                [594.500, '#ece81a', 1.6],
                [666.500, '#7a3a10', 1.4, DASH],
                [679, '#0f5d18', 1.2, '4 4'],
                [688.500, '#d8d41a', 1.2, DASH],
                [746, '#e02a2a', 1.2],
                [781.500, '#e8e8e8', 1.6],
                [786, '#c8c8c8', 1.2, DASH],
                [788, '#ffffff', 1.4, DOT]
              ]}
              labels={[
                [1000, 594, JOUR, '#8a8a8a'],
                [894, 665, 'mR1 J (12 761,5)'],
                [894, 686, 'S1 H (12 750)'],
                [894, 745, '+H OVN (12 718,9)'],
                [894, 781, '12 700'],
                [1740, 592, '+B H (12 799,5)', '#a8a8a8', true],
                [1740, 784, 'Pivot J (12 696)', '#a8a8a8', true],
                [1416, 786, 'Piv. J', '#a8a8a8', true],
                [1740, 676, 'S1 H', '#117a1f', true],
                [895, 834, <Copy key="c" />]
              ]}
              badges={[[893, 820, 62, '1@12 715,5', true]]}
              marks={
                <>
                  <Arrow x={972} y={638} c={RED} down />
                  <Cross x={972} y={754} c={GRN} />
                  <Cross x={909} y={752} c={RED} />
                  <Cross x={914} y={775} c={RED} />
                  <Cross x={920} y={775} c={RED} />
                  <Cross x={899} y={804} c={GRN} />
                  <Arrow x={909} y={816} c={GRN} />
                </>
              }
              prices={[
                [592, '12 800'],
                [631, '12 780'],
                [670, '12 760'],
                [709, '12 740'],
                [747, '12 720'],
                [786, '12 700']
              ]}
              boxes={[
                [600, '12 796,2', '#d9b8e0'],
                [648, '12 771,2', '#8e1072'],
                [673, '12 755,0', '#127a20'],
                [688, '12 750,0', '#2828c8'],
                [788, '12 696,6', '#f0f0f0']
              ]}
            />
            <Rsi
              g={RIGHT}
              gap="mt-[3px]"
              y0={840}
              h={52}
              mid={866}
              hundred={846}
              box="63,989"
              levels={[855, 864, 868, 877]}
              data={noisy(RAW('893,860 930,862 1020,858 1060,856 1120,862 1180,860 1267,862'), 3.5, 1, 43)}
            />
            <Stoch
              g={RIGHT}
              gap="mt-[2px]"
              y0={894}
              h={29}
              blues={[902, 916]}
              data={noisy(RAW('893,905 1040,906 1070,910 1095,913 1130,908 1155,903 1200,905 1240,908 1267,908'), 3.5, 0.4, 47)}
              boxes={[
                [900, '75,428', '#b04040'],
                [909, '74,394', '#e0e0e0']
              ]}
            />
            <TimeAxis g={RIGHT} y0={923} h={20} ticks={brTicks} />
          </Body>
          <BottomBar h="h-[28px]" offset="ml-[543px]" thumb="w-[78px]" />
        </Window>
      </div>
    </div>
  );
}
